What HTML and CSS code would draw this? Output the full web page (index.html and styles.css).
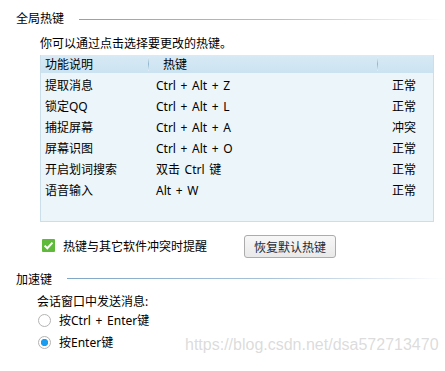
FILE: index.html
```html
<!DOCTYPE html>
<html lang="zh">
<head>
    <meta charset="UTF-8">
    <title>热键设置</title>
    <link rel="stylesheet" href="styles.css">
</head>
<body>

<div class="panel">
    <div class="section-title first">
        <span>全局热键</span>
        <div class="title-line"></div>
    </div>
    <div class="intro">你可以通过点击选择要更改的热键。</div>

    <div class="hotkey-box">
        <table class="hotkey-table">
            <thead>
                <tr>
                    <th class="col-name">功能说明</th>
                    <th class="col-key">热键</th>
                    <th class="col-state"></th>
                </tr>
            </thead>
            <tbody>
                <tr><td>提取消息</td><td class="key">Ctrl + Alt + Z</td><td class="state">正常</td></tr>
                <tr><td>锁定QQ</td><td class="key">Ctrl + Alt + L</td><td class="state">正常</td></tr>
                <tr><td>捕捉屏幕</td><td class="key">Ctrl + Alt + A</td><td class="state">冲突</td></tr>
                <tr><td>屏幕识图</td><td class="key">Ctrl + Alt + O</td><td class="state">正常</td></tr>
                <tr><td>开启划词搜索</td><td class="key">双击 Ctrl 键</td><td class="state">正常</td></tr>
                <tr><td>语音输入</td><td class="key">Alt + W</td><td class="state">正常</td></tr>
            </tbody>
        </table>
    </div>

    <div class="option-row">
        <span class="checkbox checked">
            <svg width="13" height="13" viewBox="0 0 13 13"><path d="M2.6 6.6 L5.3 9.2 L10.5 3.6" fill="none" stroke="#fff" stroke-width="2"/></svg>
        </span>
        <span class="check-label">热键与其它软件冲突时提醒</span>
        <button class="restore-btn">恢复默认热键</button>
    </div>

    <div class="section-title second">
        <span>加速键</span>
        <div class="title-line"></div>
    </div>
    <div class="sub-label">会话窗口中发送消息:</div>
    <div class="radio-row">
        <span class="radio"></span>
        <span>按Ctrl + Enter键</span>
    </div>
    <div class="radio-row">
        <span class="radio selected"></span>
        <span>按Enter键</span>
    </div>

    <div class="watermark">https://blog.csdn.net/dsa572713470</div>
</div>

</body>
</html>
```

FILE: styles.css
```css
body {
    margin: 0;
    background-color: #fff;
    font-family: "Noto Sans", "Noto Sans CJK SC", sans-serif;
    font-size: 12px;
    word-spacing: 1.5px;
    color: #000;
}
.panel {
    position: relative;
    width: 445px;
    height: 371px;
    overflow: hidden;
}
.section-title {
    display: flex;
    align-items: center;
    height: 14px;
    line-height: 14px;
    padding-left: 16px;
}
.section-title.first {
    margin-top: 12px;
}
.section-title.second {
    margin-top: 15px;
}
.title-line {
    flex: 1;
    height: 1px;
    margin-left: 15px;
    background: linear-gradient(to right, #7fa6c6, #a9c4da 55%, #ffffff);
}
.section-title.second .title-line {
    margin-top: -3px;
}
.intro {
    height: 14px;
    line-height: 14px;
    margin-top: 11px;
    padding-left: 40px;
}
.hotkey-box {
    box-sizing: border-box;
    width: 394px;
    height: 167px;
    margin: 4px 0 0 40px;
    background-color: #ebf5fa;
    border: 1px solid #cbdfeb;
    border-top: none;
}
.hotkey-table {
    width: 100%;
    border-collapse: collapse;
    table-layout: fixed;
}
.hotkey-table th {
    position: relative;
    height: 18px;
    padding: 0;
    font-weight: normal;
    text-align: left;
    background: linear-gradient(to bottom, #d7eaf5, #cbe3f1);
}
.hotkey-table th + th::before {
    content: "";
    position: absolute;
    left: 0;
    top: 2px;
    bottom: 2px;
    width: 1px;
    background: linear-gradient(to bottom, #e6f1f8, #8fb5cf, #e6f1f8);
}
.hotkey-table th.col-name {
    width: 103px;
    padding-left: 4px;
}
.hotkey-table th.col-key {
    width: 214px;
    padding-left: 15px;
}
.hotkey-table tbody tr:first-child td {
    padding-top: 2px;
}
.hotkey-table td {
    height: 21px;
    padding: 0 0 0 4px;
    line-height: 21px;
    white-space: nowrap;
}
.hotkey-table td.key {
    padding-left: 8px;
}
.hotkey-table td.state {
    padding-left: 15px;
}
.option-row {
    display: flex;
    align-items: center;
    height: 23px;
    margin-top: 13px;
    padding-left: 42px;
}
.checkbox {
    display: flex;
    width: 13px;
    height: 13px;
    margin-top: -2px;
    border-radius: 1px;
    background-color: #5fb93b;
}
.check-label {
    width: 181px;
    margin-left: 8px;
    margin-top: -2px;
}
.restore-btn {
    box-sizing: border-box;
    width: 92px;
    height: 23px;
    padding: 0;
    font-family: inherit;
    font-size: 12px;
    color: #1c2b3b;
    background: linear-gradient(to bottom, #f7f7f7, #e9e9e9);
    border: 1px solid #acacac;
    border-radius: 3px;
}
.sub-label {
    height: 14px;
    line-height: 14px;
    margin-top: 8px;
    padding-left: 37px;
}
.radio-row {
    display: flex;
    align-items: center;
    height: 22px;
    padding-left: 38px;
}
.radio {
    box-sizing: border-box;
    width: 13px;
    height: 13px;
    margin-right: 8px;
    border: 1px solid #b4b4b4;
    border-radius: 50%;
    background-color: #fff;
}
.radio.selected {
    background: radial-gradient(circle, #1a9cf0 0, #1a9cf0 3.3px, #fff 4px);
}
.watermark {
    position: absolute;
    left: 185px;
    top: 336px;
    font-family: "Liberation Sans", Arial, sans-serif;
    font-size: 16px;
    word-spacing: 0;
    color: rgba(190, 190, 190, 0.55);
    white-space: nowrap;
}
```
